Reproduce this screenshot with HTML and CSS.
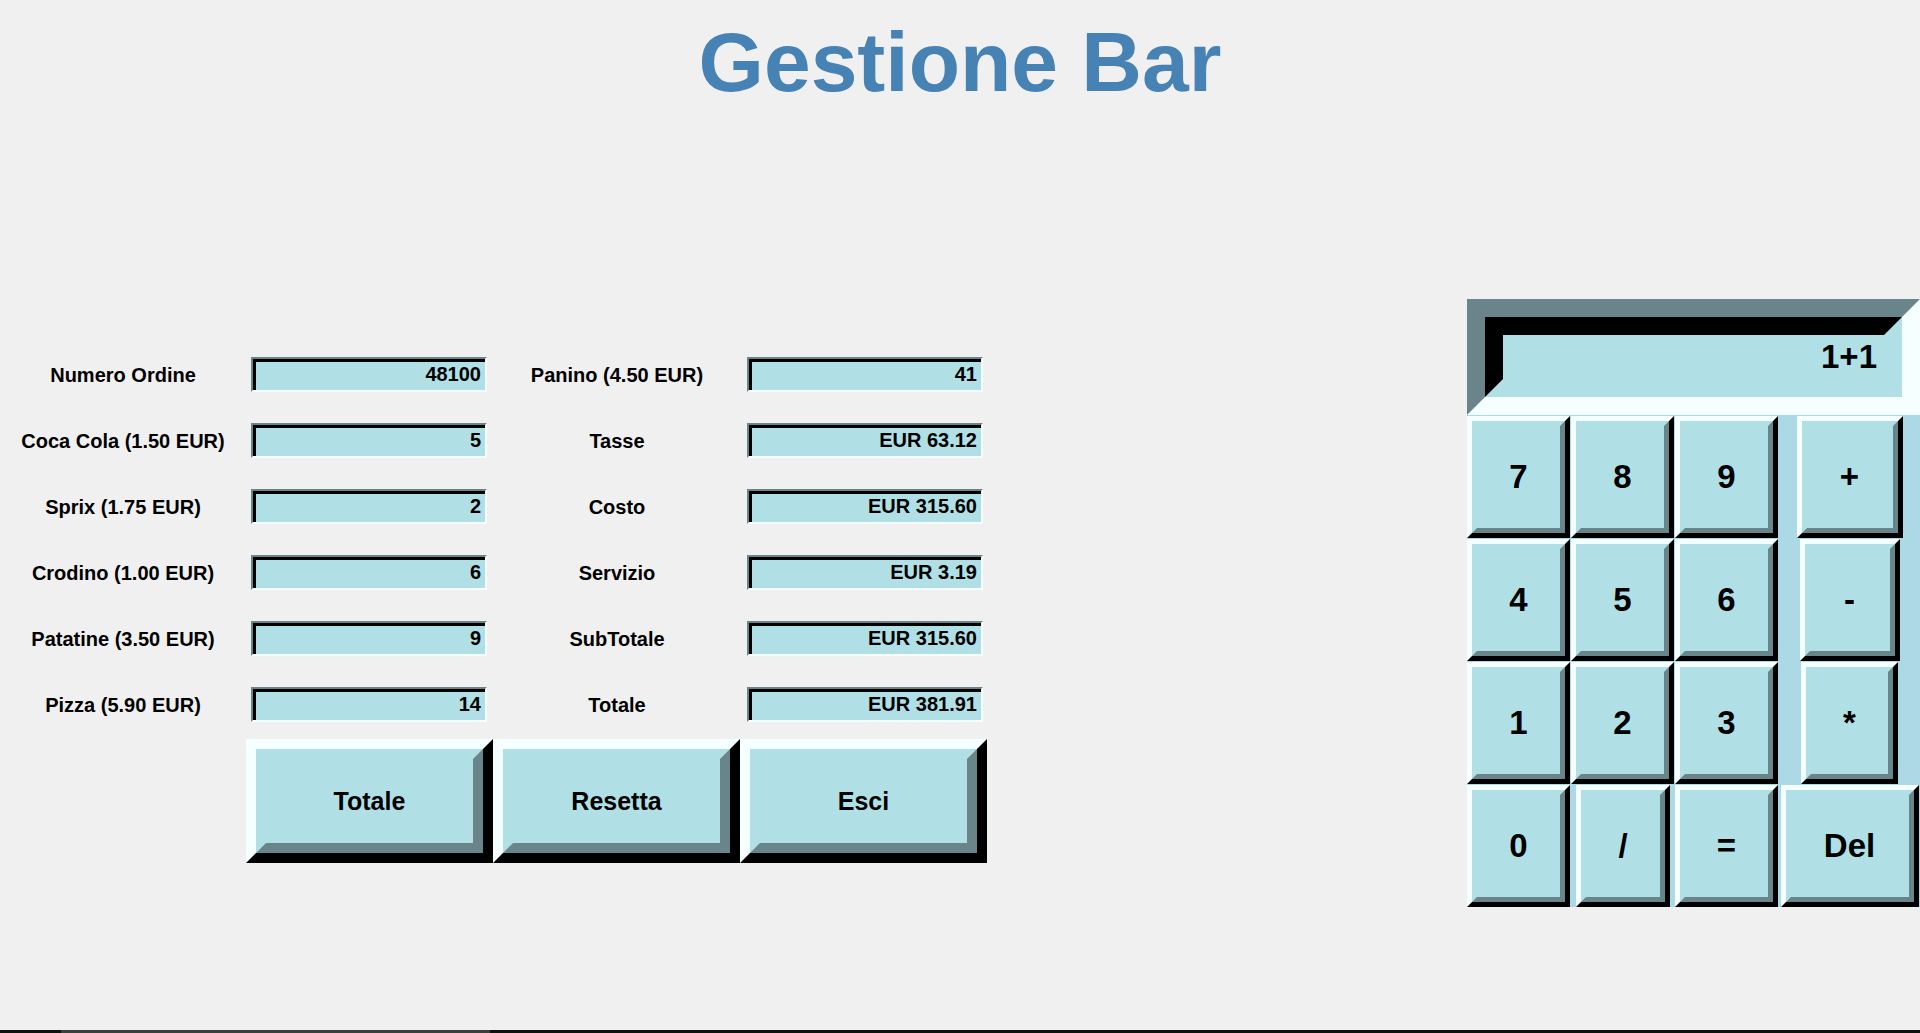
FILE: index.html
```html
<!DOCTYPE html>
<html>
<head>
    <meta charset="UTF-8">
    <title>Gestione Bar</title>
    <link rel="stylesheet" href="styles.css">
</head>
<body>
    <h1 class="title">Gestione Bar</h1>
    <main class="layout">
        <section class="order">
            <div class="fields">
                <div class="lbl first">Numero Ordine</div>
                <div class="entry">48100</div>
                <div class="lbl">Panino (4.50 EUR)</div>
                <div class="entry">41</div>

                <div class="lbl first">Coca Cola (1.50 EUR)</div>
                <div class="entry">5</div>
                <div class="lbl">Tasse</div>
                <div class="entry">EUR 63.12</div>

                <div class="lbl first">Sprix (1.75 EUR)</div>
                <div class="entry">2</div>
                <div class="lbl">Costo</div>
                <div class="entry">EUR 315.60</div>

                <div class="lbl first">Crodino (1.00 EUR)</div>
                <div class="entry">6</div>
                <div class="lbl">Servizio</div>
                <div class="entry">EUR 3.19</div>

                <div class="lbl first">Patatine (3.50 EUR)</div>
                <div class="entry">9</div>
                <div class="lbl">SubTotale</div>
                <div class="entry">EUR 315.60</div>

                <div class="lbl first">Pizza (5.90 EUR)</div>
                <div class="entry">14</div>
                <div class="lbl">Totale</div>
                <div class="entry">EUR 381.91</div>
            </div>
            <div class="actions">
                <button class="btn"><span>Totale</span></button>
                <button class="btn"><span>Resetta</span></button>
                <button class="btn"><span>Esci</span></button>
            </div>
        </section>

        <section class="calc">
            <div class="display"><div class="display_in">1+1</div></div>
            <div class="keys">
                <button class="key"><span>7</span></button>
                <button class="key"><span>8</span></button>
                <button class="key"><span>9</span></button>
                <button class="key k_plus"><span>+</span></button>

                <button class="key"><span>4</span></button>
                <button class="key"><span>5</span></button>
                <button class="key"><span>6</span></button>
                <button class="key k_minus"><span>-</span></button>

                <button class="key"><span>1</span></button>
                <button class="key"><span>2</span></button>
                <button class="key"><span>3</span></button>
                <button class="key k_mul"><span>*</span></button>

                <button class="key"><span>0</span></button>
                <button class="key k_div"><span>/</span></button>
                <button class="key"><span>=</span></button>
                <button class="key k_del"><span>Del</span></button>
            </div>
        </section>
    </main>
    <div class="scrollbar"><div class="thumb"></div></div>
</body>
</html>
```

FILE: styles.css
```css
html,body{
    height:100%;
}
body{
    margin:0;
    background:#f0f0f0;
    font-family:"Liberation Sans", Arial, sans-serif;
    font-weight:bold;
    color:#000;
    display:flex;
    flex-direction:column;
    overflow:hidden;
}
.title{
    margin:15px 0 0;
    font-size:84px;
    line-height:94px;
    color:#4682b4;
    text-align:center;
}
.layout{
    display:flex;
    align-items:flex-start;
}

/* ordine */
.order{
    margin-top:248px;
}
.fields{
    display:grid;
    grid-template-columns:251px 236px 260px 236px;
    grid-auto-rows:35px;
    row-gap:31px;
    align-items:center;
}
.lbl{
    font-size:20px;
    line-height:24px;
    text-align:center;
    white-space:nowrap;
}
.lbl.first{
    padding-right:5px;
}
.entry{
    box-sizing:border-box;
    height:35px;
    border:2px solid;
    border-color:#6a8589 #f6ffff #f6ffff #6a8589;
    box-shadow:inset 3px 3px 0 #000;
    background:#b0e0e6;
    font-size:20px;
    line-height:31px;
    text-align:right;
    padding-right:4px;
}
.actions{
    display:flex;
    margin:17px 0 0 246px;
}
.btn,.key{
    box-sizing:border-box;
    padding:0;
    margin:0;
    border-style:solid;
    border-color:#f6ffff #000 #000 #f6ffff;
    background:#b0e0e6;
    font-family:inherit;
    font-weight:bold;
    color:#000;
}
.btn>span,.key>span{
    box-sizing:border-box;
    display:flex;
    align-items:center;
    justify-content:center;
    height:100%;
    border-style:solid;
    border-color:#b0e0e6 #6a8589 #6a8589 #b0e0e6;
}
.btn{
    width:247px;
    height:124px;
    border-width:10px;
    font-size:25px;
}
.btn>span{
    border-width:10px;
}

/* calcolatrice */
.calc{
    margin:190px 0 0 auto;
    width:453px;
    height:608px;
    background:#add8e6;
}
.display{
    box-sizing:border-box;
    height:116px;
    border:18px solid;
    border-color:#6a8589 #f6ffff #f6ffff #6a8589;
}
.display_in{
    box-sizing:border-box;
    height:80px;
    border:18px solid;
    border-color:#000 #b0e0e6 #b0e0e6 #000;
    background:#b0e0e6;
    font-size:33px;
    line-height:44px;
    text-align:right;
    padding-right:7px;
}
.keys{
    display:grid;
    grid-template-columns:104px 104px 104px 141px;
    grid-auto-rows:122px;
    row-gap:1px;
    padding-top:1px;
}
.key{
    width:103px;
    height:122px;
    border-width:5px;
    font-size:33px;
}
.key>span{
    border-width:5px;
}
.k_plus,.k_minus,.k_mul,.k_del,.k_div{
    justify-self:center;
}
.k_plus{ width:106px; }
.k_minus{ width:100px; }
.k_mul{ width:97px; }
.k_div{ width:94px; }
.k_del{ width:138px; }

.scrollbar{
    margin-top:auto;
    height:3px;
    background:#101010;
}
.thumb{
    margin-left:61px;
    width:429px;
    height:100%;
    background:#3d3d3d;
}
```
